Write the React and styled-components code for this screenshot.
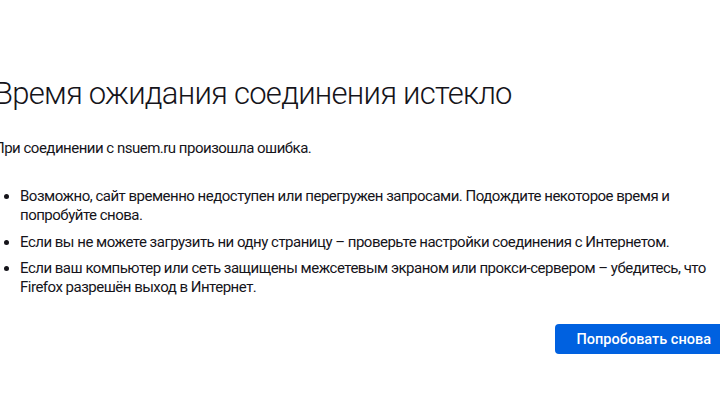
import React from 'react';
import styled, { createGlobalStyle } from 'styled-components';

const GlobalStyle = createGlobalStyle`
  html, body {
    margin: 0;
    padding: 0;
    background: #fff;
    overflow: hidden;
  }
  body {
    font-family: Roboto, "Noto Sans", sans-serif;
    color: #15141a;
  }
`;

const Page = styled.main`
  width: 739px;
  margin-left: -6px;
  padding-top: 75px;
`;

const Title = styled.h1`
  margin: 0 0 26px;
  font-size: 31px;
  font-weight: 300;
  line-height: 1.2;
  letter-spacing: -0.75px;
`;

const Intro = styled.p`
  margin: 0 0 29px;
  font-size: 15px;
  line-height: 20px;
  letter-spacing: -0.5px;
`;

const List = styled.ul`
  margin: 0 0 27px;
  padding-left: 26px;
  max-width: 724px;
`;

const Item = styled.li`
  font-size: 15px;
  line-height: 19px;
  letter-spacing: -0.5px;
  margin-bottom: 7.5px;
`;

const Actions = styled.div`
  display: flex;
  justify-content: flex-end;
`;

const RetryButton = styled.button`
  background: #0061e0;
  color: #fff;
  border: none;
  border-radius: 4px;
  font-family: inherit;
  font-size: 14.5px;
  font-weight: 500;
  height: 30px;
  padding: 0 22px;
  cursor: pointer;
`;

export default function App() {
  return (
    <>
      <GlobalStyle />
      <Page>
        <Title>Время ожидания соединения истекло</Title>
        <Intro>При соединении с nsuem.ru произошла ошибка.</Intro>
        <List>
          <Item>Возможно, сайт временно недоступен или перегружен запросами. Подождите некоторое время и попробуйте снова.</Item>
          <Item>Если вы не можете загрузить ни одну страницу – проверьте настройки соединения с Интернетом.</Item>
          <Item>Если ваш компьютер или сеть защищены межсетевым экраном или прокси-сервером – убедитесь, что Firefox разрешён выход в Интернет.</Item>
        </List>
        <Actions>
          <RetryButton>Попробовать снова</RetryButton>
        </Actions>
      </Page>
    </>
  );
}
